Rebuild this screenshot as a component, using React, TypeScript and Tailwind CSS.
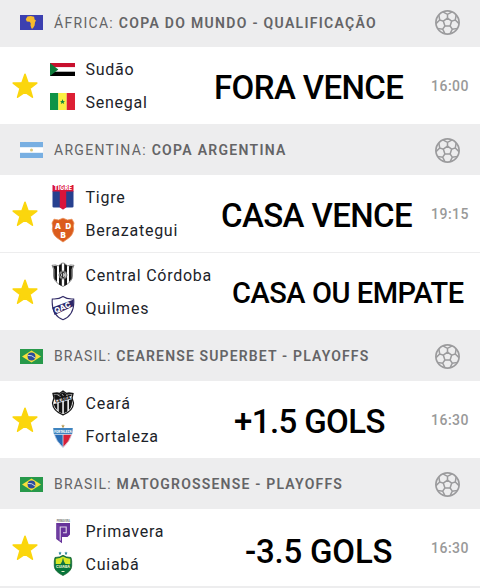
import { ReactNode } from "react"

interface Team {
    name: string;
    badge: ReactNode;
}

interface Match {
    home: Team;
    away: Team;
    tip: string;
    tipClass: string;
    time?: string;
}

interface League {
    country: string;
    name: string;
    flag: ReactNode;
    nameClass: string;
    className: string;
    matches: Match[];
}

const textFont = "font-['Roboto','Liberation_Sans',sans-serif]";

function Star() {
    return (
        <svg width="26" height="26" viewBox="0 0 26 26" fill="#fbd60d" stroke="#fbd60d" strokeWidth="1.6" strokeLinejoin="round">
            <path d="M13 1.3 16 9.7 24.8 10 17.9 15.4 20.4 24.2 13 19.1 5.6 24.2 8.1 15.4 1.2 10 10 9.7Z" />
        </svg>
    );
}

function Ball() {
    return (
        <svg width="25" height="25" viewBox="-12.5 -12.5 25 25" fill="none" stroke="#9b9b9d" strokeWidth="1.5" strokeLinejoin="round">
            <circle r="11.6" strokeWidth="1.7" />
            <path d="M0-4.4 4.2-1.4 2.6 3.6H-2.6L-4.2-1.4Z" />
            {[0, 72, 144, 216, 288].map((angle) => (
                <path key={angle} transform={`rotate(${angle})`} d="M0-4.4V-8.2M-4.6-10.6 0-8.2 4.6-10.6" />
            ))}
        </svg>
    );
}

function AfricaFlag() {
    return (
        <svg width="23" height="15" viewBox="0 0 23 15">
            <path fill="#3c40b0" d="M0 0h23v15H0z" />
            <path fill="#f8bb2c" d="M7.4 1.6 10.8.9 14.1 1.8 14.6 4.4 16 5.4 15 7.2 14.6 10.4 12.8 13.4 11.5 13.6 10.5 10.5 10.7 8.2 9.7 6.8 6.8 6.4 5.8 4.2Z" />
        </svg>
    );
}

function ArgentinaFlag() {
    return (
        <svg width="23" height="16" viewBox="0 0 23 16">
            <path fill="#78afe2" d="M0 0h23v16H0z" />
            <path fill="#fff" d="M0 5.2h23v5.6H0z" />
            <circle cx="11.5" cy="8" r="1.5" fill="#dcc678" />
        </svg>
    );
}

function BrazilFlag() {
    return (
        <svg width="23" height="15" viewBox="0 0 23 15">
            <path fill="#27994a" d="M0 0h23v15H0z" />
            <path fill="#f7e03c" d="M11.5 1.6 21 7.5 11.5 13.4 2 7.5Z" />
            <circle cx="11.5" cy="7.5" r="3.9" fill="#2c4c9c" />
            <path d="M8 6.4q4-.5 7 2.6" stroke="#dfe8ee" strokeWidth=".9" fill="none" />
        </svg>
    );
}

function SudanFlag() {
    return (
        <svg width="25" height="13" viewBox="0 0 25 13">
            <path fill="#c8102e" d="M0 0h25v4.3H0z" />
            <path fill="#fff" d="M0 4.3h25v4.4H0z" />
            <path d="M0 8.7h25V13H0z" />
            <path fill="#0d7a3a" d="M0 0 8.3 6.5 0 13Z" />
        </svg>
    );
}

function SenegalFlag() {
    return (
        <svg width="25" height="17" viewBox="0 0 25 17">
            <path fill="#0f9347" d="M0 0h8.4v17H0z" />
            <path fill="#fbf042" d="M8.3 0h8.4v17H8.3z" />
            <path fill="#dd2034" d="M16.7 0H25v17h-8.3z" />
            <path fill="#178a3c" d="m12.5 6 .7 1.9h2l-1.6 1.2.6 2-1.7-1.2-1.7 1.2.6-2-1.6-1.2h2Z" />
        </svg>
    );
}

function TigreBadge() {
    return (
        <svg width="24" height="26" viewBox="0 0 24 26">
            <path fill="#27408f" d="M1.5 7h21v15.5q0 1-1.3 1h-7L12 25.6 9.8 23.5h-7q-1.3 0-1.3-1Z" />
            <path fill="#d9143a" d="M1.5 1h21v6.5h-21zM8.8 7h6.4v16.5L12 25.6l-3.2-2.1z" />
            <text x="12" y="6.3" fontSize="5.6" fontWeight="900" fontFamily="Inter" textAnchor="middle" textLength="18" fill="#fff">TIGRE</text>
        </svg>
    );
}

function BerazateguiBadge() {
    return (
        <svg width="24" height="26" viewBox="0 0 24 26">
            <path d="M3 2.2 7.5 3 12 1.2 16.5 3 21 2.2 23 6q-1.3 3-.3 6.3-.8 6-5.7 9.2L12 25l-5-3.5Q2 18.3 1.3 12.3 2.3 9 1 6Z" fill="#db5c1d" stroke="#e88b52" strokeWidth=".8" />
            <g fontSize="7.8" fontWeight="900" fontFamily="Inter" textAnchor="middle" fill="#fff">
                <text x="6.9" y="12">A</text>
                <text x="17.4" y="12">D</text>
                <text x="12.2" y="20.5">B</text>
            </g>
        </svg>
    );
}

function CentralBadge() {
    return (
        <svg width="24" height="26" viewBox="0 0 24 26">
            <path d="M1 3.3 4.5 3 7.5 4 10 1.5 12 1 14 1.5 16.5 4 19.5 3 23 3.3 21.5 7V14Q21.5 20 12 24.5 2.5 20 2.5 14V7Z" fill="#fff" stroke="#555" strokeWidth=".7" />
            <path fill="#151515" d="M2 4.3 4.7 3.7 6 4.2V20L3.3 16.5V7ZM8 3.5l2.8-1.8V24L8 22.6ZM13.2 1.7 16 3.5v19.1L13.2 24ZM18 4.2l1.3-.5 2.7.6-1.3 2.7v9.5L18 20Z" />
            <circle cx="12" cy="13" r="4" fill="#bbb" stroke="#555" strokeWidth=".8" />
            <path d="M13.9 11.2a2.6 2.6 0 1 0 0 3.6M11.5 11v4" stroke="#333" fill="none" />
        </svg>
    );
}

function QuilmesBadge() {
    return (
        <svg width="24" height="26" viewBox="0 0 24 26">
            <path d="M1.3 4Q8 4.5 12 1.5 16 4.5 22.7 4 24 20 12 24.7 0 20 1.3 4Z" fill="#fff" stroke="#332d68" strokeWidth="1.1" />
            <path fill="#2e286a" d="M1.2 12.5 22.7 4.5 22.3 11.3 3.6 20Z" />
            <text transform="translate(12.4 15) rotate(-24)" fontSize="7.4" fontWeight="800" fontFamily="Inter" textAnchor="middle" textLength="17" fill="#fff">QAC</text>
        </svg>
    );
}

function CearaBadge() {
    return (
        <svg width="24" height="26" viewBox="0 0 24 26">
            <path d="M2 3.5 6 3 8.5 3.5 12 1 15.5 3.5 18 3 22 3.5 21 8 22.5 13Q22 21 12 24.8 2 21 1.5 13L3 8Z" fill="#fff" stroke="#171717" strokeWidth="1.3" />
            <path fill="#151515" d="M3 4.5 8.5 4.2 12 2 15.5 4.2 21 4.5 20.2 6 3.8 10ZM2.8 14 6.3 13.2V20.3Q3 17 2.8 14ZM7.7 12.7l3.6-.8V23.4l-3.6-1.7ZM12.8 11.4l3.6-.8v11L12.8 23.3ZM17.9 10.1l3-.8Q22 16 17.9 20.3Z" />
            <path d="m6.5 5 3 1.5M11 4l1.5 2M15 5l2 1" stroke="#ddd" strokeWidth=".7" />
            <text transform="translate(12.2 11) rotate(-14)" fontSize="4.7" fontWeight="900" fontFamily="Inter" textAnchor="middle" textLength="16" fill="#222">CEARÁ</text>
        </svg>
    );
}

function FortalezaBadge() {
    return (
        <svg className="overflow-visible" width="24" height="26" viewBox="0 0 24 26">
            <path fill="#b99b55" d="m12 1.2.6 1.2 1.3.2-1 .9.2 1.3-1.1-.6-1.1.6.2-1.3-1-.9 1.3-.2Z" />
            <path fill="#276bb4" d="M3 10h9v14.5Q4.5 18 3 10Z" />
            <path fill="#d71f38" d="M12 10h9q-1.5 8-9 14.5Z" />
            <path d="M3.300 11.500H20.700Q19 18 12 24.500 5 18 3.300 11.500ZM12 10v14.500" fill="none" stroke="#cfdcec" strokeWidth=".8" />
            <path fill="#3f84bf" d="M2.2 5H21.8L21.2 11H2.8Z" />
            <text x="12" y="9.5" fontSize="4" fontWeight="800" fontFamily="Inter" textAnchor="middle" textLength="17.5" lengthAdjust="spacingAndGlyphs" fill="#fff">FORTALEZA</text>
        </svg>
    );
}

function PrimaveraBadge() {
    return (
        <svg className="overflow-visible" width="24" height="26" viewBox="0 0 24 26">
            <text x="12.3" y="3.8" fontSize="3.6" fontWeight="700" fontFamily="Inter" textAnchor="middle" textLength="13" lengthAdjust="spacingAndGlyphs" fill="#777">PRIMAVERA</text>
            <path fill="#66329a" d="M5.2 5H19V16.5L16.5 19H11v6.3L5.2 21Z" />
            <path d="M7 6.800V20.500" fill="none" stroke="#8558b3" strokeWidth=".6" />
            <path d="M9.2 22.500V9h6v5.8h-3.200" fill="none" stroke="#e2d6ec" strokeWidth="1.1" />
        </svg>
    );
}

function CuiabaBadge() {
    return (
        <svg className="overflow-visible" width="24" height="26" viewBox="0 0 24 26">
            <path fill="#27839a" d="m9 .6.5 1 1.1.2-.8.8.2 1.1-1-.5-1 .5.2-1.1-.8-.8 1.1-.2ZM15 .6l.5 1 1.1.2-.8.8.2 1.1-1-.5-1 .5.2-1.1-.8-.8 1.1-.2Z" />
            <path d="M4 6.5Q9 6.5 12 4.3 15 6.5 20 6.5L20.7 10V15Q20.5 20.5 12 24.5 3.5 20.5 3.3 15V10Z" fill="#07753b" stroke="#17652f" strokeWidth=".8" />
            <path fill="#d8e826" d="M4.7 7.8Q9 7.5 12 5.5 15 7.5 19.3 7.8V13H4.7Z" />
            <path fill="#167443" d="m12 6.5 1 4 1.5 2.5h-5l1.5-2.5Z" />
            <text x="12" y="16.7" fontSize="3.8" fontWeight="800" fontFamily="Inter" textAnchor="middle" textLength="14" lengthAdjust="spacingAndGlyphs" fill="#e0eec6">CUIABÁ</text>
            <path d="M10.5 20.5h3" stroke="#e5efc5" />
        </svg>
    );
}

const leagues: League[] = [
    {
        country: "ÁFRICA",
        name: "COPA DO MUNDO - QUALIFICAÇÃO",
        flag: <AfricaFlag />,
        nameClass: "tracking-[1.3px]",
        className: "h-[47px] pb-[2px]",
        matches: [
            {
                home: { name: "Sudão", badge: <SudanFlag /> },
                away: { name: "Senegal", badge: <SenegalFlag /> },
                tip: "FORA VENCE",
                tipClass: "pl-[214px] pt-[4px] text-[33px] tracking-[-0.6px]",
                time: "16:00",
            },
        ],
    },
    {
        country: "ARGENTINA",
        name: "COPA ARGENTINA",
        flag: <ArgentinaFlag />,
        nameClass: "tracking-[1.3px]",
        className: "h-[50px]",
        matches: [
            {
                home: { name: "Tigre", badge: <TigreBadge /> },
                away: { name: "Berazategui", badge: <BerazateguiBadge /> },
                tip: "CASA VENCE",
                tipClass: "pl-[221px] pt-[5px] text-[33px] tracking-[-0.6px]",
                time: "19:15",
            },
            {
                home: { name: "Central Córdoba", badge: <CentralBadge /> },
                away: { name: "Quilmes", badge: <QuilmesBadge /> },
                tip: "CASA OU EMPATE",
                tipClass: "pl-[232px] pt-[5px] text-[29px] tracking-[-0.45px]",
            },
        ],
    },
    {
        country: "BRASIL",
        name: "CEARENSE SUPERBET - PLAYOFFS",
        flag: <BrazilFlag />,
        nameClass: "tracking-[1.15px]",
        className: "h-[50px]",
        matches: [
            {
                home: { name: "Ceará", badge: <CearaBadge /> },
                away: { name: "Fortaleza", badge: <FortalezaBadge /> },
                tip: "+1.5 GOLS",
                tipClass: "pl-[234px] pt-[5px] text-[33px] tracking-[-0.6px]",
                time: "16:30",
            },
        ],
    },
    {
        country: "BRASIL",
        name: "MATOGROSSENSE - PLAYOFFS",
        flag: <BrazilFlag />,
        nameClass: "tracking-[1.2px]",
        className: "h-[50px]",
        matches: [
            {
                home: { name: "Primavera", badge: <PrimaveraBadge /> },
                away: { name: "Cuiabá", badge: <CuiabaBadge /> },
                tip: "-3.5 GOLS",
                tipClass: "pl-[245px] pt-[8px] text-[33px] tracking-[-0.2px]",
                time: "16:30",
            },
        ],
    },
];

function TeamLine({ team }: { team: Team }) {
    return (
        <div className="flex h-[32.5px] items-center">
            <span className="flex w-[25px] justify-center">{team.badge}</span>
            <span className="ml-[10.5px] whitespace-nowrap pt-[2px] text-base tracking-[0.75px] text-[#1c2329]">{team.name}</span>
        </div>
    );
}

function MatchRow({ match }: { match: Match }) {
    return (
        <div className="grid h-[78px] grid-cols-1 border-b border-[#ededee] bg-white">
            <div className="col-start-1 row-start-1 flex items-center pl-3">
                <Star />
                <div className="ml-3">
                    <TeamLine team={match.home} />
                    <TeamLine team={match.away} />
                </div>
                {match.time && (
                    <span className="ml-auto pr-[11px] text-sm font-medium tracking-[0.5px] text-[#999]">{match.time}</span>
                )}
            </div>
            {/* tip is written over the row */}
            <div className={`col-start-1 row-start-1 flex items-center whitespace-nowrap font-medium text-black ${match.tipClass}`}>
                {match.tip}
            </div>
        </div>
    );
}

function LeagueHeader({ league }: { league: League }) {
    return (
        <div className={`flex items-center bg-[#ededee] pl-5 pr-5 text-sm text-[#646466] ${league.className}`}>
            {league.flag}
            <span className={`ml-[11px] whitespace-nowrap ${league.nameClass}`}>
                {league.country}: <b className="font-semibold">{league.name}</b>
            </span>
            <span className="ml-auto">
                <Ball />
            </span>
        </div>
    );
}

export default function App() {
    return (
        <main className={`h-[588px] w-[480px] overflow-hidden bg-[#ededee] ${textFont}`}>
            {leagues.map((league) => (
                <section key={league.name}>
                    <LeagueHeader league={league} />
                    {league.matches.map((match) => (
                        <MatchRow key={match.home.name} match={match} />
                    ))}
                </section>
            ))}
        </main>
    );
}
